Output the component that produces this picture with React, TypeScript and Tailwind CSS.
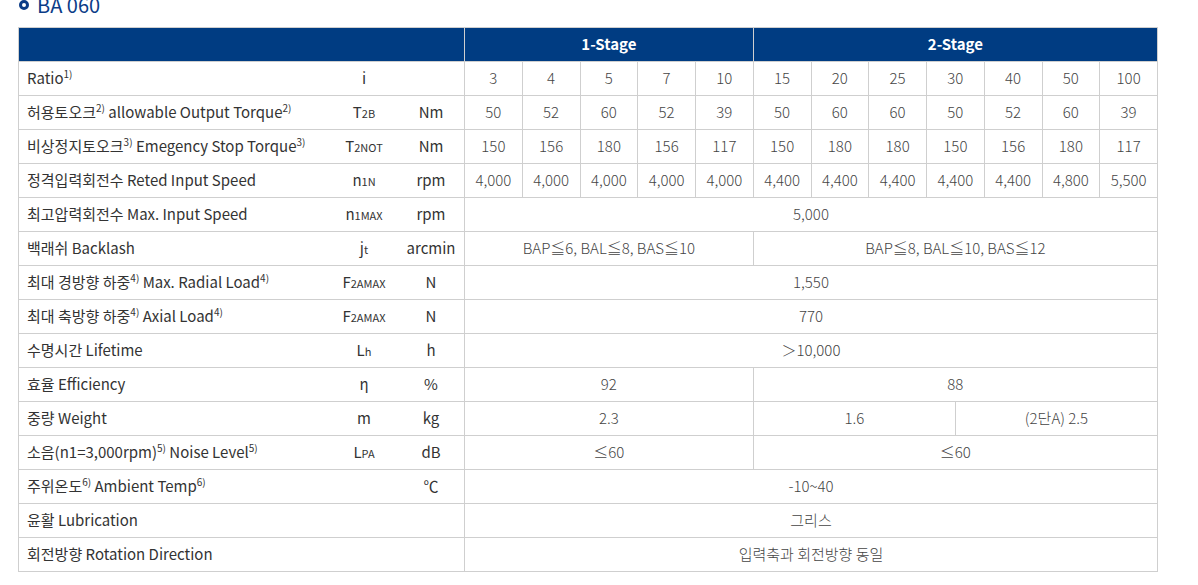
import type { ReactNode } from 'react';

type Cell = { span: number; text: ReactNode };
type Row = { label: ReactNode; sym?: ReactNode; unit?: string; cells: Cell[] };

const Sup = ({ children }: { children: ReactNode }) => (
  <span className="relative -top-[6px] text-[10px] leading-none">{children}</span>
);

const Sub = ({ children }: { children: ReactNode }) => (
  <span className="text-[11px] leading-none">{children}</span>
);

// each numeric column = 2 half-columns (24 half-columns total)
const singles = (vals: string[]): Cell[] => vals.map((v) => ({ span: 2, text: v }));
const full = (text: ReactNode): Cell[] => [{ span: 24, text }];

const rows: Row[] = [
  { label: <>Ratio<Sup>1)</Sup></>, sym: 'i', cells: singles(['3', '4', '5', '7', '10', '15', '20', '25', '30', '40', '50', '100']) },
  {
    label: <>허용토오크<Sup>2)</Sup> allowable Output Torque<Sup>2)</Sup></>,
    sym: <>T<Sub>2B</Sub></>,
    unit: 'Nm',
    cells: singles(['50', '52', '60', '52', '39', '50', '60', '60', '50', '52', '60', '39']),
  },
  {
    label: <>비상정지토오크<Sup>3)</Sup> Emegency Stop Torque<Sup>3)</Sup></>,
    sym: <>T<Sub>2NOT</Sub></>,
    unit: 'Nm',
    cells: singles(['150', '156', '180', '156', '117', '150', '180', '180', '150', '156', '180', '117']),
  },
  {
    label: '정격입력회전수 Reted Input Speed',
    sym: <>n<Sub>1N</Sub></>,
    unit: 'rpm',
    cells: singles(['4,000', '4,000', '4,000', '4,000', '4,000', '4,400', '4,400', '4,400', '4,400', '4,400', '4,800', '5,500']),
  },
  { label: '최고압력회전수 Max. Input Speed', sym: <>n<Sub>1MAX</Sub></>, unit: 'rpm', cells: full('5,000') },
  {
    label: '백래쉬 Backlash',
    sym: <>j<Sub>t</Sub></>,
    unit: 'arcmin',
    cells: [
      { span: 10, text: 'BAP≦6, BAL≦8, BAS≦10' },
      { span: 14, text: 'BAP≦8, BAL≦10, BAS≦12' },
    ],
  },
  { label: <>최대 경방향 하중<Sup>4)</Sup> Max. Radial Load<Sup>4)</Sup></>, sym: <>F<Sub>2AMAX</Sub></>, unit: 'N', cells: full('1,550') },
  { label: <>최대 축방향 하중<Sup>4)</Sup> Axial Load<Sup>4)</Sup></>, sym: <>F<Sub>2AMAX</Sub></>, unit: 'N', cells: full('770') },
  { label: '수명시간 Lifetime', sym: <>L<Sub>h</Sub></>, unit: 'h', cells: full('＞10,000') },
  { label: '효율 Efficiency', sym: 'η', unit: '%', cells: [{ span: 10, text: '92' }, { span: 14, text: '88' }] },
  {
    label: '중량 Weight',
    sym: 'm',
    unit: 'kg',
    cells: [
      { span: 10, text: '2.3' },
      { span: 7, text: '1.6' },
      { span: 7, text: '(2단A) 2.5' },
    ],
  },
  {
    label: <>소음(n1=3,000rpm)<Sup>5)</Sup> Noise Level<Sup>5)</Sup></>,
    sym: <>L<Sub>PA</Sub></>,
    unit: 'dB',
    cells: [{ span: 10, text: '≤60' }, { span: 14, text: '≤60' }],
  },
  { label: <>주위온도<Sup>6)</Sup> Ambient Temp<Sup>6)</Sup></>, unit: '℃', cells: full('-10~40') },
  { label: '윤활 Lubrication', cells: full('그리스') },
  { label: '회전방향 Rotation Direction', cells: full('입력축과 회전방향 동일') },
];

const spanClass: Record<number, string> = {
  2: 'col-span-2',
  7: 'col-span-7',
  10: 'col-span-10',
  14: 'col-span-14',
  24: 'col-span-24',
};

export default function App() {
  return (
    <div className="h-[585px] overflow-hidden bg-white pl-[18px] font-['Noto_Sans_CJK_KR','Noto_Sans',sans-serif] text-[#333]">
      {/* Title */}
      <div className="-mt-[7px] mb-[11px] flex h-[23px] items-center gap-[8px] text-[20px] leading-none text-[#0b3c87]">
        <span className="ml-[1px] h-[10px] w-[10px] rounded-full border-[3px] border-[#0b3c87]" />
        <span>BA 060</span>
      </div>

      {/* Spec table */}
      <div className="grid w-[1140px] grid-cols-[445px_repeat(24,minmax(0,1fr))] auto-rows-[33px] gap-px border border-[#cfcfcf] bg-[#cfcfcf]">
        <div className="bg-[#003c82]" />
        <div className="col-span-10 flex items-center justify-center bg-[#003c82] text-[15px] font-bold text-white">1-Stage</div>
        <div className="col-span-14 flex items-center justify-center bg-[#003c82] text-[15px] font-bold text-white">2-Stage</div>

        {rows.map((row, i) => (
          <div key={i} className="contents">
            <div className="flex items-center bg-white text-[15px] text-[#333]">
              <div className="flex-1 whitespace-nowrap pl-[8px]">{row.label}</div>
              <div className="w-[68px] text-center">{row.sym}</div>
              <div className="w-[66px] text-center">{row.unit}</div>
            </div>
            {row.cells.map((c, j) => (
              <div
                key={j}
                className={`${spanClass[c.span]} flex items-center justify-center whitespace-nowrap bg-white text-[15px] font-light text-[#444]`}
              >
                {c.text}
              </div>
            ))}
          </div>
        ))}
      </div>
    </div>
  );
}
